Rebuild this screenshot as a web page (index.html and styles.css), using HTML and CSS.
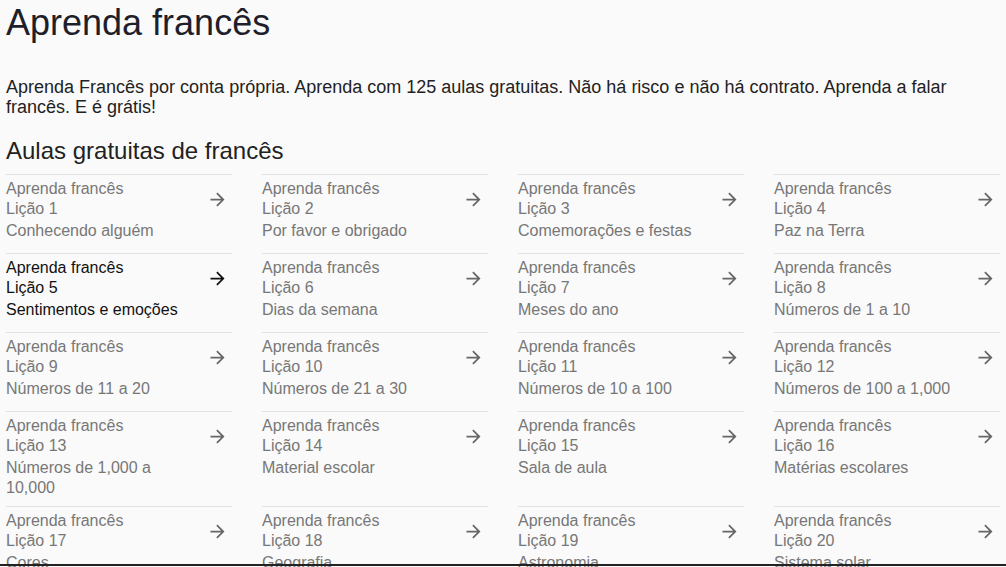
FILE: index.html
```html
<!DOCTYPE html>
<html lang="pt">
<head>
<meta charset="utf-8">
<title>Aprenda francês</title>
<link rel="stylesheet" href="styles.css">
</head>
<body>
<main class="page">
  <h1 class="title">Aprenda francês</h1>
  <p class="intro">Aprenda Francês por conta própria. Aprenda com 125 aulas gratuitas. Não há risco e não há contrato. Aprenda a falar francês. E é grátis!</p>
  <h2 class="subtitle">Aulas gratuitas de francês</h2>
  <div class="lessons">
    <a class="lesson" href="#"><div class="text"><div>Aprenda francês</div><div>Lição 1</div><div class="desc">Conhecendo alguém</div></div><span class="arrow"><svg viewBox="0 0 24 24"><path d="M12 4l-1.41 1.41L16.17 11H4v2h12.17l-5.58 5.59L12 20l8-8z"/></svg></span></a>
    <a class="lesson" href="#"><div class="text"><div>Aprenda francês</div><div>Lição 2</div><div class="desc">Por favor e obrigado</div></div><span class="arrow"><svg viewBox="0 0 24 24"><path d="M12 4l-1.41 1.41L16.17 11H4v2h12.17l-5.58 5.59L12 20l8-8z"/></svg></span></a>
    <a class="lesson" href="#"><div class="text"><div>Aprenda francês</div><div>Lição 3</div><div class="desc">Comemorações e festas</div></div><span class="arrow"><svg viewBox="0 0 24 24"><path d="M12 4l-1.41 1.41L16.17 11H4v2h12.17l-5.58 5.59L12 20l8-8z"/></svg></span></a>
    <a class="lesson" href="#"><div class="text"><div>Aprenda francês</div><div>Lição 4</div><div class="desc">Paz na Terra</div></div><span class="arrow"><svg viewBox="0 0 24 24"><path d="M12 4l-1.41 1.41L16.17 11H4v2h12.17l-5.58 5.59L12 20l8-8z"/></svg></span></a>
    <a class="lesson active" href="#"><div class="text"><div>Aprenda francês</div><div>Lição 5</div><div class="desc">Sentimentos e emoções</div></div><span class="arrow"><svg viewBox="0 0 24 24"><path d="M12 4l-1.41 1.41L16.17 11H4v2h12.17l-5.58 5.59L12 20l8-8z"/></svg></span></a>
    <a class="lesson" href="#"><div class="text"><div>Aprenda francês</div><div>Lição 6</div><div class="desc">Dias da semana</div></div><span class="arrow"><svg viewBox="0 0 24 24"><path d="M12 4l-1.41 1.41L16.17 11H4v2h12.17l-5.58 5.59L12 20l8-8z"/></svg></span></a>
    <a class="lesson" href="#"><div class="text"><div>Aprenda francês</div><div>Lição 7</div><div class="desc">Meses do ano</div></div><span class="arrow"><svg viewBox="0 0 24 24"><path d="M12 4l-1.41 1.41L16.17 11H4v2h12.17l-5.58 5.59L12 20l8-8z"/></svg></span></a>
    <a class="lesson" href="#"><div class="text"><div>Aprenda francês</div><div>Lição 8</div><div class="desc">Números de 1 a 10</div></div><span class="arrow"><svg viewBox="0 0 24 24"><path d="M12 4l-1.41 1.41L16.17 11H4v2h12.17l-5.58 5.59L12 20l8-8z"/></svg></span></a>
    <a class="lesson" href="#"><div class="text"><div>Aprenda francês</div><div>Lição 9</div><div class="desc">Números de 11 a 20</div></div><span class="arrow"><svg viewBox="0 0 24 24"><path d="M12 4l-1.41 1.41L16.17 11H4v2h12.17l-5.58 5.59L12 20l8-8z"/></svg></span></a>
    <a class="lesson" href="#"><div class="text"><div>Aprenda francês</div><div>Lição 10</div><div class="desc">Números de 21 a 30</div></div><span class="arrow"><svg viewBox="0 0 24 24"><path d="M12 4l-1.41 1.41L16.17 11H4v2h12.17l-5.58 5.59L12 20l8-8z"/></svg></span></a>
    <a class="lesson" href="#"><div class="text"><div>Aprenda francês</div><div>Lição 11</div><div class="desc">Números de 10 a 100</div></div><span class="arrow"><svg viewBox="0 0 24 24"><path d="M12 4l-1.41 1.41L16.17 11H4v2h12.17l-5.58 5.59L12 20l8-8z"/></svg></span></a>
    <a class="lesson" href="#"><div class="text"><div>Aprenda francês</div><div>Lição 12</div><div class="desc">Números de 100 a 1,000</div></div><span class="arrow"><svg viewBox="0 0 24 24"><path d="M12 4l-1.41 1.41L16.17 11H4v2h12.17l-5.58 5.59L12 20l8-8z"/></svg></span></a>
    <a class="lesson" href="#"><div class="text"><div>Aprenda francês</div><div>Lição 13</div><div class="desc">Números de 1,000 a 10,000</div></div><span class="arrow"><svg viewBox="0 0 24 24"><path d="M12 4l-1.41 1.41L16.17 11H4v2h12.17l-5.58 5.59L12 20l8-8z"/></svg></span></a>
    <a class="lesson" href="#"><div class="text"><div>Aprenda francês</div><div>Lição 14</div><div class="desc">Material escolar</div></div><span class="arrow"><svg viewBox="0 0 24 24"><path d="M12 4l-1.41 1.41L16.17 11H4v2h12.17l-5.58 5.59L12 20l8-8z"/></svg></span></a>
    <a class="lesson" href="#"><div class="text"><div>Aprenda francês</div><div>Lição 15</div><div class="desc">Sala de aula</div></div><span class="arrow"><svg viewBox="0 0 24 24"><path d="M12 4l-1.41 1.41L16.17 11H4v2h12.17l-5.58 5.59L12 20l8-8z"/></svg></span></a>
    <a class="lesson" href="#"><div class="text"><div>Aprenda francês</div><div>Lição 16</div><div class="desc">Matérias escolares</div></div><span class="arrow"><svg viewBox="0 0 24 24"><path d="M12 4l-1.41 1.41L16.17 11H4v2h12.17l-5.58 5.59L12 20l8-8z"/></svg></span></a>
    <a class="lesson" href="#"><div class="text"><div>Aprenda francês</div><div>Lição 17</div><div class="desc">Cores</div></div><span class="arrow"><svg viewBox="0 0 24 24"><path d="M12 4l-1.41 1.41L16.17 11H4v2h12.17l-5.58 5.59L12 20l8-8z"/></svg></span></a>
    <a class="lesson" href="#"><div class="text"><div>Aprenda francês</div><div>Lição 18</div><div class="desc">Geografia</div></div><span class="arrow"><svg viewBox="0 0 24 24"><path d="M12 4l-1.41 1.41L16.17 11H4v2h12.17l-5.58 5.59L12 20l8-8z"/></svg></span></a>
    <a class="lesson" href="#"><div class="text"><div>Aprenda francês</div><div>Lição 19</div><div class="desc">Astronomia</div></div><span class="arrow"><svg viewBox="0 0 24 24"><path d="M12 4l-1.41 1.41L16.17 11H4v2h12.17l-5.58 5.59L12 20l8-8z"/></svg></span></a>
    <a class="lesson" href="#"><div class="text"><div>Aprenda francês</div><div>Lição 20</div><div class="desc">Sistema solar</div></div><span class="arrow"><svg viewBox="0 0 24 24"><path d="M12 4l-1.41 1.41L16.17 11H4v2h12.17l-5.58 5.59L12 20l8-8z"/></svg></span></a>
  </div>
</main>
<div class="bottom-line"></div>
</body>
</html>
```
FILE: styles.css
```css
html, body {
  margin: 0;
  padding: 0;
  background: #fafafa;
}
body {
  font-family: "Liberation Sans", Arial, sans-serif;
  color: #202124;
  overflow: hidden;
}
.page {
  padding: 0 6px;
}
.title {
  margin: 2px 0 0;
  font-size: 36px;
  font-weight: 400;
  line-height: 41px;
  color: #1f1f2b;
}
.intro {
  margin: 34px 0 0;
  font-size: 18px;
  line-height: 20px;
  color: #222;
}
.subtitle {
  margin: 20px 0 0;
  font-size: 24px;
  font-weight: 400;
  line-height: 28px;
  color: #222;
}
.lessons {
  margin-top: 9px;
  display: grid;
  grid-template-columns: repeat(4, 1fr);
  column-gap: 30px;
}
.lesson {
  display: flex;
  box-sizing: border-box;
  min-height: 79px;
  padding: 4px 0 8px;
  border-top: 1px solid #e2e2e2;
  color: #777;
  text-decoration: none;
  font-size: 16px;
  line-height: 20px;
}
.lesson.active {
  color: #111;
}
.text {
  flex: 1;
  min-width: 0;
}
.desc {
  margin-top: 2px;
}
.arrow {
  flex: none;
  width: 36px;
  height: 40px;
  display: flex;
  align-items: center;
  justify-content: flex-end;
}
.arrow svg {
  width: 21px;
  height: 21px;
  margin-right: 4px;
  fill: #666;
}
.lesson.active .arrow svg {
  fill: #111;
}
.bottom-line {
  position: fixed;
  left: 0;
  right: 0;
  bottom: 1px;
  height: 2px;
  background: #222;
}
```
